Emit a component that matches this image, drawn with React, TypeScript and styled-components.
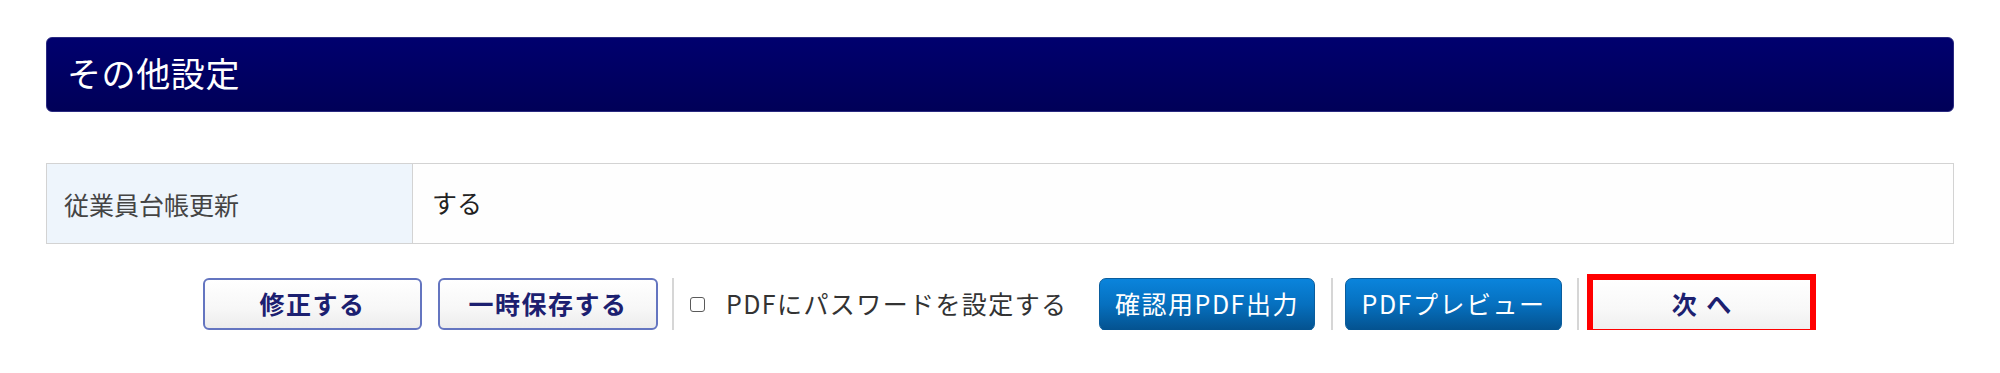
import React from "react";
import styled, { createGlobalStyle } from "styled-components";

const GlobalStyle = createGlobalStyle`
  html, body {
    margin: 0;
    padding: 0;
    background: #ffffff;
  }
  body {
    font-family: "Noto Sans CJK JP", "Noto Sans", sans-serif;
    color: #333333;
  }
`;

const Page = styled.div`
  padding: 37px 46px 0;
  box-sizing: border-box;
  width: 2000px;
`;

const SectionHeader = styled.h2`
  margin: 0;
  height: 75px;
  box-sizing: border-box;
  display: flex;
  align-items: center;
  padding: 0 0 4px 20px;
  border-radius: 6px;
  border: 1px solid #2a2a80;
  background: linear-gradient(to bottom, #00006e 0%, #000058 100%);
  color: #ffffff;
  font-size: 34px;
  font-weight: 400;
  letter-spacing: 0.6px;
`;

const InfoTable = styled.div`
  margin-top: 51px;
  display: grid;
  grid-template-columns: 366px 1fr;
  border: 1px solid #d3d3d3;
  height: 81px;
  box-sizing: border-box;
`;

const LabelCell = styled.div`
  background: #eef5fc;
  border-right: 1px solid #d3d3d3;
  display: flex;
  align-items: center;
  padding-left: 17px;
  font-size: 25px;
  color: #444444;
`;

const ValueCell = styled.div`
  display: flex;
  align-items: center;
  padding: 0 0 4px 19px;
  font-size: 25px;
  color: #222222;
  background: #fefefe;
`;

const ActionRow = styled.div`
  margin-top: 34px;
  height: 52px;
  display: flex;
  align-items: center;
  justify-content: center;
  padding-left: 19px;
`;

const LightButton = styled.button<{ $w: number; $mr: number }>`
  width: ${(p) => p.$w}px;
  height: 52px;
  margin-right: ${(p) => p.$mr}px;
  flex: none;
  box-sizing: border-box;
  border: 2px solid #6475c0;
  border-radius: 6px;
  background: linear-gradient(to bottom, #ffffff 0%, #f7f7f7 60%, #ececec 100%);
  color: #1c2070;
  font-family: inherit;
  font-size: 25px;
  font-weight: 700;
  letter-spacing: 1.5px;
  padding: 0 0 3px;
  cursor: pointer;
`;

const BlueButton = styled.button<{ $w: number; $mr: number }>`
  width: ${(p) => p.$w}px;
  height: 53px;
  margin-right: ${(p) => p.$mr}px;
  flex: none;
  box-sizing: border-box;
  border: 1px solid #0a5d9d;
  border-radius: 7px;
  background: linear-gradient(to bottom, #0a84dc 0%, #0670bf 50%, #04528f 100%);
  color: #ffffff;
  font-family: inherit;
  font-size: 25px;
  font-weight: 400;
  letter-spacing: 1.5px;
  padding: 0 0 3px;
  cursor: pointer;
`;

const Divider = styled.span<{ $mr: number }>`
  flex: none;
  width: 2px;
  height: 52px;
  background: #d6d6d6;
  margin-right: ${(p) => p.$mr}px;
`;

const CheckLabel = styled.label`
  flex: none;
  display: flex;
  align-items: center;
  width: 409px;
  font-size: 25px;
  letter-spacing: 1.4px;
  color: #333333;
  padding-bottom: 3px;
  box-sizing: border-box;
`;

const Check = styled.input`
  appearance: none;
  -webkit-appearance: none;
  width: 15px;
  height: 15px;
  margin: 3px 21px 0 0;
  border: 1.5px solid #5a5a5a;
  border-radius: 3px;
  background: #ffffff;
  box-sizing: border-box;
  flex: none;
`;

const NextButton = styled.button`
  flex: none;
  width: 229px;
  height: 61px;
  box-sizing: border-box;
  border: 6px solid #ff0000;
  border-radius: 0;
  background: linear-gradient(to bottom, #ffffff 0%, #f8f8f8 60%, #efefef 100%);
  color: #1c2070;
  font-family: inherit;
  font-size: 25px;
  font-weight: 700;
  padding: 0 0 3px;
  cursor: pointer;
  word-spacing: 4px;
`;

export default function App() {
  return (
    <>
      <GlobalStyle />
      <Page>
        <SectionHeader>その他設定</SectionHeader>
        <InfoTable>
          <LabelCell>従業員台帳更新</LabelCell>
          <ValueCell>する</ValueCell>
        </InfoTable>
        <ActionRow>
          <LightButton $w={219} $mr={16}>修正する</LightButton>
          <LightButton $w={220} $mr={14}>一時保存する</LightButton>
          <Divider $mr={16} />
          <CheckLabel>
            <Check type="checkbox" />
            PDFにパスワードを設定する
          </CheckLabel>
          <BlueButton $w={216} $mr={16}>確認用PDF出力</BlueButton>
          <Divider $mr={12} />
          <BlueButton $w={217} $mr={15}>PDFプレビュー</BlueButton>
          <Divider $mr={8} />
          <NextButton>次 へ</NextButton>
        </ActionRow>
      </Page>
    </>
  );
}
